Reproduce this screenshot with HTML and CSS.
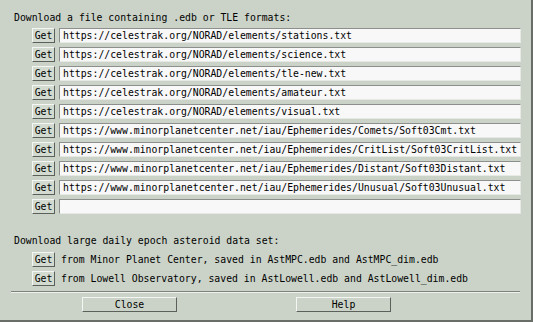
FILE: index.html
```html
<!doctype html>
<html lang="en">
<head>
    <meta charset="utf-8">
    <title>Download catalogs</title>
    <link rel="stylesheet" href="styles.css">
</head>
<body>
    <div class="dialog">
        <p class="heading">Download a file containing .edb or TLE formats:</p>
        <div class="url-list">
            <div class="row"><button class="get">Get</button><input class="url" type="text" value="https://celestrak.org/NORAD/elements/stations.txt"></div>
            <div class="row"><button class="get">Get</button><input class="url" type="text" value="https://celestrak.org/NORAD/elements/science.txt"></div>
            <div class="row"><button class="get">Get</button><input class="url" type="text" value="https://celestrak.org/NORAD/elements/tle-new.txt"></div>
            <div class="row"><button class="get">Get</button><input class="url" type="text" value="https://celestrak.org/NORAD/elements/amateur.txt"></div>
            <div class="row"><button class="get">Get</button><input class="url" type="text" value="https://celestrak.org/NORAD/elements/visual.txt"></div>
            <div class="row"><button class="get">Get</button><input class="url" type="text" value="https://www.minorplanetcenter.net/iau/Ephemerides/Comets/Soft03Cmt.txt"></div>
            <div class="row"><button class="get">Get</button><input class="url" type="text" value="https://www.minorplanetcenter.net/iau/Ephemerides/CritList/Soft03CritList.txt"></div>
            <div class="row"><button class="get">Get</button><input class="url" type="text" value="https://www.minorplanetcenter.net/iau/Ephemerides/Distant/Soft03Distant.txt"></div>
            <div class="row"><button class="get">Get</button><input class="url" type="text" value="https://www.minorplanetcenter.net/iau/Ephemerides/Unusual/Soft03Unusual.txt"></div>
            <div class="row"><button class="get">Get</button><input class="url" type="text" value=""></div>
        </div>
        <p class="heading heading-epoch">Download large daily epoch asteroid data set:</p>
        <div class="epoch-list">
            <div class="row"><button class="get">Get</button><span class="label">from Minor Planet Center, saved in AstMPC.edb and AstMPC_dim.edb</span></div>
            <div class="row"><button class="get">Get</button><span class="label">from Lowell Observatory, saved in AstLowell.edb and AstLowell_dim.edb</span></div>
        </div>
        <div class="separator"></div>
        <div class="actions">
            <button class="action">Close</button>
            <button class="action">Help</button>
        </div>
    </div>
</body>
</html>
```

FILE: styles.css
```css
body {
    margin: 0;
    background-color: #cbd3c8;
    font-family: "DejaVu Sans Mono", "Liberation Mono", monospace;
    font-size: 9.8px;
    color: #000000;
}
.dialog {
    width: 533px;
    height: 322px;
    box-sizing: border-box;
    border-right: 2px solid #6a6e69;
    border-bottom: 2px solid #6a6e69;
    display: flex;
    flex-direction: column;
    overflow: hidden;
}
.heading {
    margin: 12px 0 0 14px;
    height: 12px;
    line-height: 12px;
    white-space: pre;
}
.url-list {
    margin-top: 4px;
    display: flex;
    flex-direction: column;
    gap: 4px;
}
.row {
    display: flex;
    align-items: center;
    height: 15px;
    padding-left: 32px;
}
.get {
    width: 23px;
    height: 15px;
    box-sizing: border-box;
    padding: 0;
    margin: 0 4px 0 0;
    font: inherit;
    line-height: 11px;
    color: #000000;
    background-color: #d3dbd0;
    border: 1px solid;
    border-color: #f4f6f3 #5c605b #5c605b #f4f6f3;
}
.url {
    width: 462px;
    height: 15px;
    box-sizing: border-box;
    margin: 0;
    padding: 0 0 0 3px;
    font: inherit;
    color: #000000;
    background-color: #f8f8f8;
    border: 1px solid;
    border-color: #8d8f8c #e6e9e4 #e6e9e4 #8d8f8c;
    outline: none;
}
.heading-epoch {
    margin-top: 21px;
}
.epoch-list {
    margin-top: 5px;
    display: flex;
    flex-direction: column;
    gap: 4px;
}
.label {
    padding-left: 2px;
    white-space: pre;
}
.separator {
    margin: 5px 11px 0 11px;
    border-top: 1px solid #7d827b;
    border-bottom: 1px solid #eef1ec;
}
.actions {
    margin-top: 4px;
    display: flex;
    padding-left: 82px;
    gap: 119px;
}
.action {
    width: 95px;
    height: 15px;
    box-sizing: border-box;
    padding: 0;
    font: inherit;
    line-height: 11px;
    color: #000000;
    background-color: #cbd3c8;
    border: 1px solid;
    border-color: #f4f6f3 #5c605b #5c605b #f4f6f3;
}
```
